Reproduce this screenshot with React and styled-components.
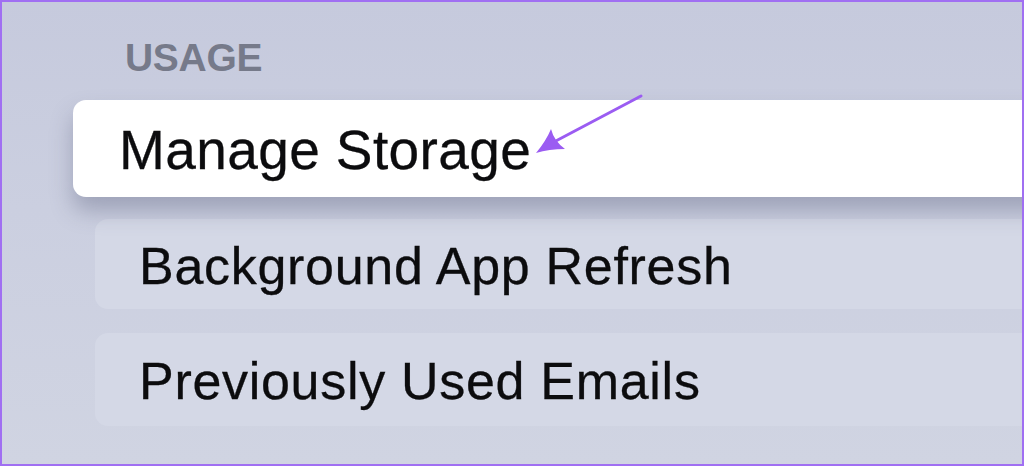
import styled, { createGlobalStyle } from 'styled-components';

const Global = createGlobalStyle`
  html, body {
    margin: 0;
    padding: 0;
  }
  body {
    font-family: "Liberation Sans", Arial, sans-serif;
  }
`;

const Frame = styled.div`
  position: relative;
  width: 1024px;
  height: 466px;
  box-sizing: border-box;
  border: 2px solid #a06ff2;
  overflow: hidden;
  background: linear-gradient(180deg, #c6cadd 0%, #cbcfe0 45%, #d0d4e2 100%);
  display: flex;
  flex-direction: column;
  padding-top: 36px;
`;

const SectionLabel = styled.div`
  font-size: 39px;
  line-height: 1;
  font-weight: 700;
  color: #767a8a;
  letter-spacing: -0.3px;
  padding-left: 123px;
  margin-bottom: 23px;
`;

const List = styled.div`
  display: flex;
  flex-direction: column;
`;

const Row = styled.div`
  display: flex;
  align-items: center;
  box-sizing: border-box;
  width: 1100px;
  height: ${p => p.$height}px;
  margin-left: ${p => p.$left}px;
  margin-top: ${p => p.$gap}px;
  padding-left: ${p => p.$pad}px;
  padding-top: 3px;
  border-radius: 13px;
  font-size: ${p => (p.$focused ? 55 : 52)}px;
  letter-spacing: ${p => (p.$focused ? 0.4 : 0.7)}px;
  line-height: 1;
  color: #0c0c0e;
  -webkit-text-stroke: 0.3px #0c0c0e;
  background: ${p => (p.$focused ? '#ffffff' : '#d4d8e6')};
  box-shadow: ${p =>
    p.$focused ? '0 14px 22px rgba(88, 93, 120, 0.38)' : 'none'};
  position: relative;
  z-index: ${p => (p.$focused ? 1 : 0)};
`;

const Arrow = styled.svg`
  position: absolute;
  left: 0;
  top: 0;
  z-index: 2;
  pointer-events: none;
`;

const rows = [
  { label: 'Manage Storage', focused: true, left: 71, height: 97, gap: 0, pad: 46 },
  { label: 'Background App Refresh', left: 93, height: 90, gap: 22, pad: 44 },
  { label: 'Previously Used Emails', left: 93, height: 93, gap: 24, pad: 44 },
];

export default function App() {
  return (
    <>
      <Global />
      <Frame>
        <SectionLabel>USAGE</SectionLabel>
        <List>
          {rows.map(r => (
            <Row
              key={r.label}
              $focused={r.focused}
              $left={r.left}
              $height={r.height}
              $gap={r.gap}
              $pad={r.pad}
            >
              {r.label}
            </Row>
          ))}
        </List>
        <Arrow width="1024" height="466" viewBox="0 0 1024 466">
          <line
            x1="639"
            y1="94"
            x2="550"
            y2="141"
            stroke="#9b5cf2"
            strokeWidth="3"
            strokeLinecap="round"
          />
          <path
            d="M534 151 Q544 139 549 127 Q552 139 563 147 Q547 147 534 151 Z"
            fill="#9b5cf2"
          />
        </Arrow>
      </Frame>
    </>
  );
}
